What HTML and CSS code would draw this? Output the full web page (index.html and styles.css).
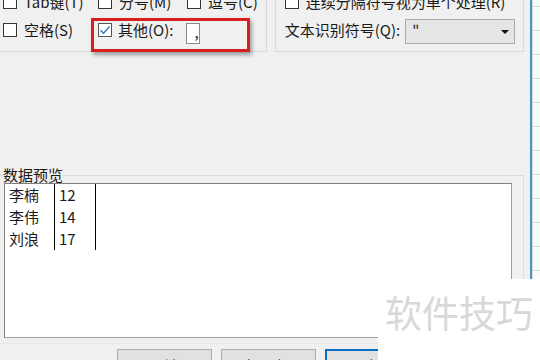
FILE: index.html
```html
<!DOCTYPE html>
<html lang="zh-CN">

<head>
    <meta charset="UTF-8">
    <meta name="viewport" content="width=device-width, initial-scale=1.0">
    <title>文本导入向导</title>
    <link rel="stylesheet" href="styles.css">
</head>

<body>
    <div class="screen">
        <div class="dialog">
            <div class="top">
                <div class="group group-left">
                    <div class="opt-grid">
                        <label class="opt"><span class="box"></span>Tab键(T)</label>
                        <label class="opt"><span class="box"></span>分号(M)</label>
                        <label class="opt"><span class="box"></span>逗号(C)</label>
                        <label class="opt"><span class="box"></span>空格(S)</label>
                        <label class="opt opt-other">
                            <span class="box">
                                <svg width="12" height="12" viewBox="0 0 12 12">
                                    <path d="M1.5 6.2 L4.6 9.2 L10.6 2.4" fill="none" stroke="#2f6fc4" stroke-width="1.4"/>
                                </svg>
                            </span>其他(O):<span class="field">,</span>
                        </label>
                    </div>
                </div>
                <div class="group group-right">
                    <label class="opt"><span class="box"></span>连续分隔符号视为单个处理(R)</label>
                    <div class="opt">文本识别符号(Q):<span class="select">"<span class="arrow"></span></span></div>
                </div>
            </div>

            <div class="preview">
                <div class="preview-title">数据预览</div>
                <div class="preview-box">
                    <table class="data">
                        <tr><td>李楠</td><td>12</td></tr>
                        <tr><td>李伟</td><td>14</td></tr>
                        <tr><td>刘浪</td><td>17</td></tr>
                    </table>
                </div>
            </div>

            <div class="buttons">
                <button class="btn">取消</button>
                <button class="btn">&lt; 上一步(B)</button>
                <button class="btn btn-default">下一步(N) &gt;</button>
                <button class="btn">完成(F)</button>
            </div>
        </div>
        <div class="sheet"></div>

        <!-- annotation and watermark drawn over the screenshot -->
        <div class="highlight"></div>
        <div class="watermark">软件技巧</div>
    </div>
</body>

</html>
```

FILE: styles.css
```css
body {
    margin: 0;
    font-family: "Noto Sans CJK SC", "Noto Sans", sans-serif;
    font-size: 15px;
    color: #1a1a1a;
}

.screen {
    position: relative;
    display: flex;
    width: 540px;
    height: 360px;
    overflow: hidden;
    background-color: #fff;
}

.dialog {
    width: 524px;
    padding-right: 6px;
    background-color: #f0f0f0;
    border-right: 2px solid #4a93c4;
    flex-shrink: 0;
}

.sheet {
    flex: 1;
    border-left: 1px solid #cfdde6;
    background: repeating-linear-gradient(to bottom, #fafafa 0 23px, #d6d6d6 23px 24px);
    background-position: 0 7px;
}

/* option groups */
.top {
    display: flex;
    gap: 8px;
    margin-top: -20px;
}

.group {
    border: 1px solid #d9d9d9;
    padding: 7px 8px;
}

.group-left {
    width: 260px;
    margin-left: -6px;
}

.group-right {
    flex: 1;
    padding-left: 9px;
}

.opt-grid {
    display: grid;
    grid-template-columns: 95px 89px 1fr;
}

.opt {
    display: flex;
    align-items: center;
    height: 28px;
    line-height: 18px;
    white-space: nowrap;
}

.box {
    display: inline-flex;
    align-items: center;
    justify-content: center;
    width: 12px;
    height: 12px;
    border: 1px solid #333;
    background-color: #fff;
    margin-right: 7px;
    flex-shrink: 0;
}

.opt-other .box {
    border-color: #555;
    margin-right: 6px;
}

.field {
    display: inline-block;
    width: 27px;
    height: 19px;
    margin: 7px 0 0 13px;
    padding-left: 7px;
    border: 1px solid #8a8a8a;
    background-color: #fff;
    line-height: 16px;
}

.select {
    display: flex;
    align-items: center;
    justify-content: space-between;
    width: 97px;
    height: 23px;
    margin: 3px 0 0 5px;
    padding: 0 5px 0 6px;
    border: 1px solid #acacac;
    background-color: #e5e5e5;
}

.arrow {
    width: 0;
    height: 0;
    border-left: 4px solid transparent;
    border-right: 4px solid transparent;
    border-top: 4px solid #111;
}

/* preview */
.preview {
    margin: 123px 0 0 -5px;
    padding: 0 11px 5px 8px;
    border-top: 1px solid #dcdcdc;
    border-right: 1px solid #dcdcdc;
    border-bottom: 1px solid #e6e6e6;
}

.preview-title {
    width: max-content;
    margin-top: -9px;
    background-color: #f0f0f0;
    line-height: 16px;
}

.preview-box {
    height: 153px;
    margin-left: 1px;
    border: 1px solid #828282;
    border-right-color: #a0a0a0;
    border-bottom-color: #a0a0a0;
    background-color: #fff;
}

.data {
    border-collapse: collapse;
}

.data td {
    height: 22px;
    padding: 0 0 0 4px;
    border-right: 1px solid #000;
    line-height: 18px;
}

.data td:first-child {
    width: 45px;
}

.data td:last-child {
    width: 36px;
}

/* buttons */
.buttons {
    display: flex;
    justify-content: flex-end;
    gap: 9px;
    margin-top: 5px;
}

.btn {
    width: 95px;
    height: 30px;
    padding: 4px 0 0;
    border: 1px solid #adadad;
    background-color: #e1e1e1;
    color: #1a1a1a;
    font-family: inherit;
    font-size: 15px;
    line-height: 18px;
    vertical-align: top;
}

.btn-default {
    border: 2px solid #0a6fc4;
}

.highlight {
    position: absolute;
    left: 91px;
    top: 18px;
    width: 153px;
    height: 28px;
    border: 3px solid #d81f20;
    box-shadow: 2px 3px 4px rgba(0, 0, 0, 0.35);
}

.watermark {
    position: absolute;
    left: 378px;
    top: 279px;
    width: 162px;
    height: 81px;
    padding-left: 7px;
    box-sizing: border-box;
    background-color: #fff;
    color: #d8d8d8;
    font-size: 37px;
    line-height: 66px;
}
```
